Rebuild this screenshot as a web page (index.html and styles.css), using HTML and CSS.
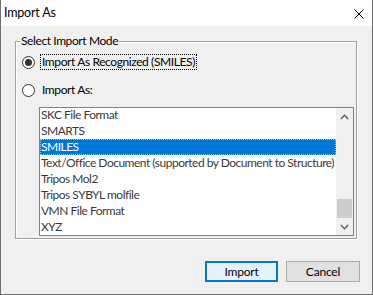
FILE: index.html
```html
<!DOCTYPE html>
<html>
<head>
<meta charset="utf-8">
<link rel="stylesheet" href="styles.css">
</head>
<body>
<div class="window">
  <div class="titlebar">
    <span class="title">Import As</span>
    <svg class="close" width="10" height="10" viewBox="0 0 10 10"><path d="M0.5 0.5 L9.5 9.5 M9.5 0.5 L0.5 9.5" stroke="#000" stroke-width="1" fill="none"/></svg>
  </div>
  <div class="content">
    <div class="group">
      <div class="legend">Select Import Mode</div>
      <div class="radio-row first">
        <span class="radio checked"></span>
        <span class="label focus">Import As Recognized (SMILES)</span>
      </div>
      <div class="radio-row second">
        <span class="radio"></span>
        <span class="label">Import As:</span>
      </div>
      <div class="listbox">
        <div class="items">
          <div class="item">SKC File Format</div>
          <div class="item">SMARTS</div>
          <div class="item selected">SMILES</div>
          <div class="item">Text/Office Document (supported by Document to Structure)</div>
          <div class="item">Tripos Mol2</div>
          <div class="item">Tripos SYBYL molfile</div>
          <div class="item">VMN File Format</div>
          <div class="item">XYZ</div>
        </div>
        <div class="scrollbar">
          <div class="sb-btn"><svg width="9" height="6" viewBox="0 0 9 6"><polyline points="0.8,5 4.5,1.3 8.2,5" fill="none" stroke="#606060" stroke-width="1.5"/></svg></div>
          <div class="track"><div class="thumb"></div></div>
          <div class="sb-btn"><svg width="9" height="6" viewBox="0 0 9 6"><polyline points="0.8,1 4.5,4.7 8.2,1" fill="none" stroke="#606060" stroke-width="1.5"/></svg></div>
        </div>
      </div>
    </div>
    <div class="buttons">
      <button class="btn default">Import</button>
      <button class="btn cancel">Cancel</button>
    </div>
  </div>
</div>
</body>
</html>
```

FILE: styles.css
```css
* { box-sizing: border-box; }
html, body { margin: 0; padding: 0; }
body {
  font-family: "Lato", "Noto Sans", sans-serif;
  font-size: 12px;
  letter-spacing: -0.4px;
  color: #000;
  background: #fff;
}
.window {
  width: 373px;
  height: 295px;
  border: 1px solid #6f6f6f;
  border-top: none;
  display: flex;
  flex-direction: column;
  background: #f0f0f0;
}
.titlebar {
  height: 26px;
  background: #fff;
  display: flex;
  align-items: center;
  justify-content: space-between;
  padding-left: 3px;
  padding-right: 8px;
  flex: none;
}
.title {
  font-size: 12.5px;
  letter-spacing: -0.2px;
  line-height: 16px;
  margin-top: -1px;
}
.close { display: block; margin-top: 1px; }
.content {
  flex: 1;
  display: flex;
  flex-direction: column;
}
.group {
  margin: 15px 15px 0 14px;
  width: 342px;
  border: 1px solid #a0a0a0;
  box-shadow: 1px 1px 0 #fff, inset 1px 1px 0 #fff;
  display: flex;
  flex-direction: column;
  align-items: flex-start;
}
.legend {
  margin-top: -9px;
  margin-left: 4px;
  padding: 0 1px;
  line-height: 16px;
  height: 16px;
  background: #f0f0f0;
}
.radio-row {
  display: flex;
  align-items: center;
  height: 16px;
  padding-left: 6px;
}
.radio-row.first { margin-top: 5px; }
.radio-row.second { margin-top: 12px; }
.radio {
  width: 13px;
  height: 13px;
  border-radius: 50%;
  border: 1px solid #333;
  background: #fff;
  display: flex;
  align-items: center;
  justify-content: center;
  margin-right: 5px;
  flex: none;
}
.radio.checked::after {
  content: "";
  width: 7px;
  height: 7px;
  border-radius: 50%;
  background: #333;
}
.label {
  line-height: 14px;
  padding: 0 1px;
  border: 1px solid transparent;
}
.label.focus { border: 1px dotted #000; }
.listbox {
  margin: 9px 0 2px 23px;
  width: 315px;
  height: 129px;
  border: 1px solid #828282;
  background: #fff;
  display: flex;
}
.items {
  flex: 1;
  display: flex;
  flex-direction: column;
  justify-content: flex-end;
  overflow: hidden;
}
.item {
  height: 16px;
  line-height: 16px;
  padding-left: 1px;
  color: #3a3a3a;
  letter-spacing: -0.5px;
  white-space: nowrap;
  flex: none;
}
.item.selected {
  background: #0078d7;
  color: #fff;
  outline: 1px dotted rgba(255,255,255,0.55);
  outline-offset: -1px;
}
.scrollbar {
  width: 17px;
  flex: none;
  background: #f0f0f0;
  display: flex;
  flex-direction: column;
}
.sb-btn {
  height: 17px;
  display: flex;
  align-items: center;
  justify-content: center;
}
.sb-btn svg { display: block; }
.track {
  flex: 1;
  display: flex;
  flex-direction: column;
  justify-content: flex-end;
}
.thumb {
  height: 19px;
  margin: 0 1px;
  background: #cdcdcd;
}
.buttons {
  display: flex;
  justify-content: flex-end;
  gap: 8px;
  margin-top: 22px;
  padding-right: 12px;
}
.btn {
  font-family: inherit;
  font-size: 12px;
  letter-spacing: -0.2px;
  height: 21px;
  padding: 0;
  line-height: 17px;
  color: #000;
  background: #e1e1e1;
  border: 1px solid #adadad;
  border-radius: 0;
}
.btn.default {
  width: 73px;
  border-color: #0078d7;
  box-shadow: inset 0 0 0 1px #0078d7;
  background: #e5f1fb;
}
.btn.cancel { width: 74px; }
```
